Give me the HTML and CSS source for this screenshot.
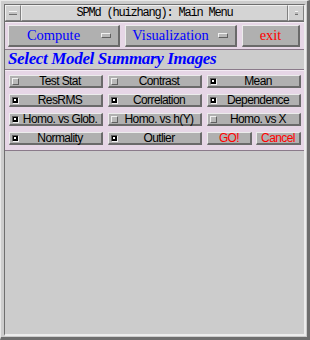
FILE: index.html
```html
<!DOCTYPE html>
<html lang="en">
<head>
  <meta charset="UTF-8">
  <title>SPMd Main Menu</title>
  <link rel="stylesheet" href="styles.css">
</head>
<body>
  <div class="window">
    <div class="frame">
      <div class="titlebar">
        <div class="tb-btn"><span class="tb-dash"></span></div>
        <div class="tb-title">SPMd (huizhang): Main Menu</div>
        <div class="tb-btn"><span class="tb-dot"></span></div>
      </div>
      <div class="menubar">
        <div class="menu-btn wide">Compute<span class="cascade"></span></div>
        <div class="menu-btn wide">Visualization<span class="cascade"></span></div>
        <div class="menu-btn exit">exit</div>
      </div>
      <div class="heading">Select Model Summary Images</div>
      <div class="panel">
        <div class="toggle"><span class="ind"></span><span class="label">Test Stat</span></div>
        <div class="toggle"><span class="ind"></span><span class="label">Contrast</span></div>
        <div class="toggle"><span class="ind on"></span><span class="label">Mean</span></div>
        <div class="toggle"><span class="ind on"></span><span class="label">ResRMS</span></div>
        <div class="toggle"><span class="ind on"></span><span class="label">Correlation</span></div>
        <div class="toggle"><span class="ind on"></span><span class="label">Dependence</span></div>
        <div class="toggle"><span class="ind on"></span><span class="label">Homo. vs Glob.</span></div>
        <div class="toggle"><span class="ind"></span><span class="label">Homo. vs h(Y)</span></div>
        <div class="toggle"><span class="ind"></span><span class="label">Homo. vs X</span></div>
        <div class="toggle"><span class="ind on"></span><span class="label">Normality</span></div>
        <div class="toggle"><span class="ind on"></span><span class="label">Outlier</span></div>
        <div class="actions">
          <div class="push red">GO!</div>
          <div class="push red">Cancel</div>
        </div>
      </div>
      <div class="empty"></div>
    </div>
  </div>
</body>
</html>
```

FILE: styles.css
```css
body {
  margin: 0;
  background: #cccccc;
}

.window {
  width: 310px;
  height: 340px;
  box-sizing: border-box;
  background: #cccccc;
  border-top: 1px solid #e8e8e8;
  border-left: 1px solid #e8e8e8;
  border-right: 3px solid #6e6e6e;
  border-bottom: 3px solid #6e6e6e;
  padding: 3px 1px 1px 3px;
  display: flex;
}

.frame {
  flex: 1;
  display: flex;
  flex-direction: column;
  border-top: 1px solid #6e6e6e;
  border-left: 1px solid #6e6e6e;
  border-right: 2px solid #ececec;
  border-bottom: 2px solid #ececec;
}

/* title bar */
.titlebar {
  height: 16px;
  display: flex;
  border-bottom: 1px solid #6e6e6e;
}

.tb-btn {
  width: 16px;
  box-sizing: border-box;
  background: #d0d0d0;
  border-top: 1px solid #f0f0f0;
  border-left: 1px solid #f0f0f0;
  border-right: 1px solid #808080;
  border-bottom: 1px solid #808080;
  display: flex;
  align-items: center;
  justify-content: center;
}

.tb-dash {
  width: 8px;
  height: 2px;
  background: #c0c0c0;
  border-top: 1px solid #f4f4f4;
  border-bottom: 1px solid #707070;
}

.tb-dot {
  width: 3px;
  height: 2px;
  background: #b8b8b8;
  border-top: 1px solid #f4f4f4;
  border-bottom: 1px solid #707070;
}

.tb-title {
  flex: 1;
  box-sizing: border-box;
  background: #d4d4d4;
  border-top: 1px solid #f0f0f0;
  border-left: 1px solid #f0f0f0;
  border-right: 1px solid #808080;
  border-bottom: 1px solid #808080;
  font-family: "Liberation Mono", monospace;
  font-size: 12px;
  letter-spacing: -1.2px;
  line-height: 14px;
  text-align: center;
  color: #000;
}

/* menu bar */
.menubar {
  display: flex;
  gap: 5px;
  padding: 2px 3px 2px 3px;
  background: #e6d6e6;
  border-top: 1px solid #f4ecf4;
  border-bottom: 1px solid #8a7a8a;
}

.menu-btn {
  height: 22px;
  box-sizing: border-box;
  background: #b0b0b0;
  border-top: 1px solid #ececec;
  border-left: 1px solid #ececec;
  border-right: 2px solid #6a6a6a;
  border-bottom: 2px solid #6a6a6a;
  display: flex;
  align-items: center;
  justify-content: center;
  font-family: "Liberation Serif", serif;
  font-size: 14.5px;
  color: #0000ff;
  position: relative;
}

.menu-btn.wide {
  width: 112px;
  padding-right: 20px;
}

.menu-btn.exit {
  width: 58px;
  color: #ff0000;
}

.cascade {
  position: absolute;
  right: 7px;
  top: 7px;
  width: 10px;
  height: 5px;
  box-sizing: border-box;
  background: #b8b8b8;
  border-top: 1px solid #f0f0f0;
  border-left: 1px solid #f0f0f0;
  border-right: 1px solid #606060;
  border-bottom: 1px solid #606060;
}

/* heading */
.heading {
  height: 19px;
  padding-left: 3px;
  font-family: "Liberation Serif", serif;
  font-weight: bold;
  font-style: italic;
  font-size: 17px;
  letter-spacing: -0.35px;
  line-height: 18px;
  color: #0000ff;
  border-bottom: 1px solid #8a7a8a;
}

/* toggle panel */
.panel {
  display: grid;
  grid-template-columns: repeat(3, 94px);
  grid-auto-rows: 13px;
  column-gap: 5px;
  row-gap: 6px;
  padding: 4px 3px 5px 4px;
  background: #e6d6e6;
  border-top: 1px solid #f4ecf4;
  border-bottom: 1px solid #8a7a8a;
}

.toggle,
.push {
  box-sizing: border-box;
  background: #b0b0b0;
  border-top: 1px solid #ececec;
  border-left: 1px solid #ececec;
  border-right: 2px solid #6a6a6a;
  border-bottom: 2px solid #6a6a6a;
  font-family: "Liberation Sans", sans-serif;
  font-size: 12px;
  letter-spacing: -0.6px;
  line-height: 10px;
  color: #000;
}

.toggle {
  display: flex;
  align-items: center;
  padding-left: 2px;
}

.ind {
  width: 7px;
  height: 7px;
  box-sizing: border-box;
  background: #b8b8b8;
  border-top: 1px solid #f0f0f0;
  border-left: 1px solid #f0f0f0;
  border-right: 1px solid #606060;
  border-bottom: 1px solid #606060;
  position: relative;
}

.ind.on {
  background: #000;
  border-top: 1px solid #606060;
  border-left: 1px solid #606060;
  border-right: 1px solid #f0f0f0;
  border-bottom: 1px solid #f0f0f0;
}

.ind.on::after {
  content: "";
  position: absolute;
  left: 1px;
  top: 1px;
  width: 2px;
  height: 2px;
  background: #ffffff;
}

.label {
  flex: 1;
  text-align: center;
}

.actions {
  display: flex;
  gap: 4px;
}

.push {
  flex: 1;
  text-align: center;
}

.push.red {
  color: #ff0000;
}

.empty {
  flex: 1;
}
```
